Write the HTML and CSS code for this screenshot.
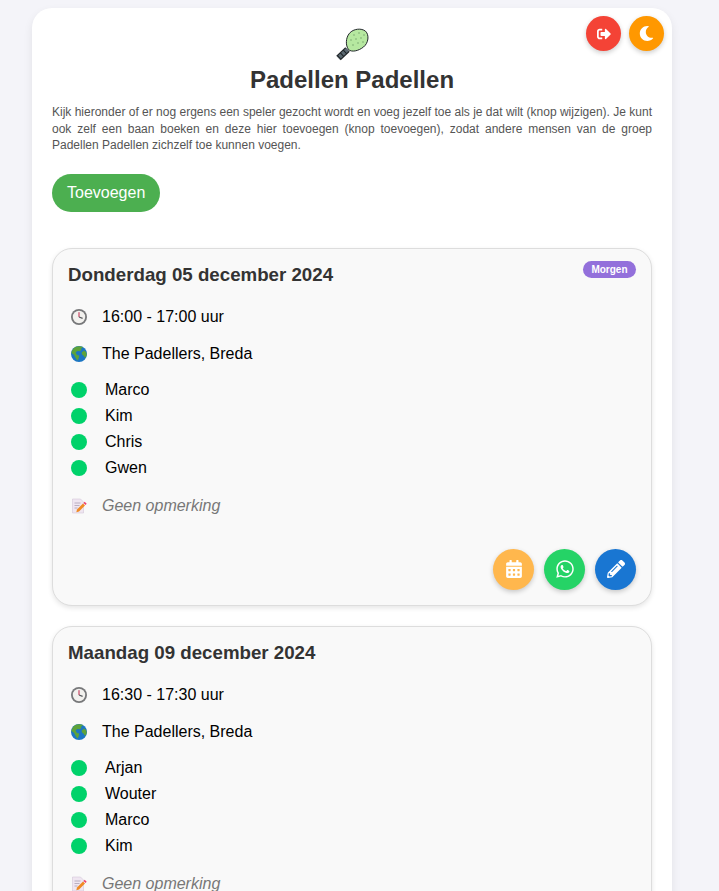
FILE: index.html
```html
<!DOCTYPE html>
<html lang="nl">
<head>
    <meta charset="UTF-8">
    <meta name="viewport" content="width=device-width, initial-scale=1.0">
    <title>Padellen Padellen</title>
    <link rel="stylesheet" href="styles.css">
</head>
<body>
    <svg class="sprite" aria-hidden="true">
        <symbol id="i-logout" viewBox="0 0 512 512"><path d="M497 273L329 441c-15 15-41 4.5-41-17v-96H152c-13.3 0-24-10.7-24-24v-96c0-13.3 10.7-24 24-24h136V88c0-21.4 25.9-32 41-17l168 168c9.3 9.4 9.3 24.6 0 34zM192 436v-40c0-6.6-5.4-12-12-12H96c-17.7 0-32-14.3-32-32V160c0-17.7 14.3-32 32-32h84c6.6 0 12-5.4 12-12V76c0-6.6-5.4-12-12-12H96c-53 0-96 43-96 96v192c0 53 43 96 96 96h84c6.6 0 12-5.4 12-12z"/></symbol>
        <symbol id="i-moon" viewBox="0 0 512 512"><path d="M283.211 512c78.962 0 151.079-35.925 198.857-94.792 7.068-8.708-.639-21.43-11.562-19.35-124.203 23.654-238.262-71.576-238.262-196.954 0-72.222 38.662-138.635 101.498-174.394 9.686-5.512 7.25-20.197-3.756-22.23A258.156 258.156 0 0 0 283.211 0c-141.309 0-256 114.511-256 256 0 141.309 114.511 256 256 256z"/></symbol>
        <symbol id="i-calendar" viewBox="0 0 448 512"><path d="M0 464c0 26.5 21.5 48 48 48h352c26.5 0 48-21.5 48-48V192H0v272zm320-196c0-6.6 5.4-12 12-12h40c6.6 0 12 5.4 12 12v40c0 6.6-5.4 12-12 12h-40c-6.6 0-12-5.4-12-12v-40zm0 128c0-6.6 5.4-12 12-12h40c6.6 0 12 5.4 12 12v40c0 6.6-5.4 12-12 12h-40c-6.6 0-12-5.4-12-12v-40zM192 268c0-6.6 5.4-12 12-12h40c6.6 0 12 5.4 12 12v40c0 6.6-5.4 12-12 12h-40c-6.6 0-12-5.4-12-12v-40zm0 128c0-6.6 5.4-12 12-12h40c6.6 0 12 5.4 12 12v40c0 6.6-5.4 12-12 12h-40c-6.6 0-12-5.4-12-12v-40zM64 268c0-6.6 5.4-12 12-12h40c6.6 0 12 5.4 12 12v40c0 6.6-5.4 12-12 12H76c-6.6 0-12-5.4-12-12v-40zm0 128c0-6.6 5.4-12 12-12h40c6.6 0 12 5.4 12 12v40c0 6.6-5.4 12-12 12H76c-6.6 0-12-5.4-12-12v-40zM400 64h-48V16c0-8.8-7.2-16-16-16h-32c-8.8 0-16 7.2-16 16v48H160V16c0-8.8-7.2-16-16-16h-32c-8.8 0-16 7.2-16 16v48H48C21.5 64 0 85.5 0 112v48h448v-48c0-26.5-21.5-48-48-48z"/></symbol>
        <symbol id="i-whatsapp" viewBox="0 0 448 512"><path d="M380.9 97.1C339 55.1 283.2 32 223.9 32c-122.4 0-222 99.6-222 222 0 39.1 10.2 77.3 29.6 111L0 480l117.7-30.9c32.4 17.7 68.9 27 106.1 27h.1c122.3 0 224.1-99.6 224.1-222 0-59.3-25.2-115-67.1-157zm-157 341.6c-33.2 0-65.7-8.9-94-25.7l-6.7-4-69.8 18.3L72 359.2l-4.4-7c-18.5-29.4-28.2-63.3-28.2-98.2 0-101.7 82.8-184.5 184.6-184.5 49.3 0 95.6 19.2 130.4 54.1 34.8 34.9 56.2 81.2 56.1 130.5 0 101.8-84.9 184.6-186.6 184.6zm101.2-138.2c-5.5-2.8-32.8-16.2-37.9-18-5.1-1.9-8.8-2.8-12.5 2.8-3.7 5.6-14.3 18-17.6 21.8-3.2 3.7-6.5 4.2-12 1.4-32.6-16.3-54-29.1-75.5-66-5.7-9.8 5.7-9.1 16.3-30.3 1.8-3.7.9-6.9-.5-9.7-1.4-2.8-12.5-30.1-17.1-41.2-4.5-10.8-9.1-9.3-12.5-9.5-3.2-.2-6.9-.2-10.6-.2-3.7 0-9.7 1.4-14.8 6.9-5.1 5.6-19.4 19-19.4 46.3 0 27.3 19.9 53.7 22.6 57.4 2.8 3.7 39.1 59.7 94.8 83.8 35.2 15.2 49 16.5 66.6 13.9 10.7-1.6 32.8-13.4 37.4-26.4 4.6-13 4.6-24.1 3.2-26.4-1.3-2.5-5-3.9-10.5-6.6z"/></symbol>
        <symbol id="i-pencil" viewBox="0 0 512 512"><path d="M497.9 142.1l-46.1 46.1c-4.7 4.7-12.3 4.7-17 0l-111-111c-4.7-4.7-4.7-12.3 0-17l46.1-46.1c18.7-18.7 49.1-18.7 67.9 0l60.1 60.1c18.8 18.7 18.8 49.1 0 67.9zM284.2 99.8L21.6 362.4.4 483.9c-2.9 16.4 11.4 30.6 27.8 27.8l121.5-21.3 262.6-262.6c4.7-4.7 4.7-12.3 0-17l-111-111c-4.8-4.7-12.4-4.7-17.1 0zM124.1 339.9c-5.5-5.5-5.5-14.3 0-19.8l154-154c5.5-5.5 14.3-5.5 19.8 0s5.5 14.3 0 19.8l-154 154c-5.5 5.5-14.3 5.5-19.8 0zM88 424h48v36.3l-64.5 11.3-31.1-31.1L51.7 376H88v48z"/></symbol>
        <symbol id="i-clock" viewBox="0 0 16 16">
            <circle cx="8" cy="8" r="8" fill="#77787a"/>
            <circle cx="8" cy="8" r="6.200" fill="#f2f1ee"/>
            <path d="M8 8V3.200" stroke="#c2274b" stroke-width="1" fill="none"/>
            <path d="M8 8l3.600 1.400" stroke="#55585c" stroke-width="1.200" fill="none"/>
        </symbol>
        <symbol id="i-globe" viewBox="0 0 16 16">
            <circle cx="8" cy="8" r="8" fill="#1c76c4"/>
            <path d="M4 1.200c2-1 5-1.400 7.500-.4 .6 .8-.4 1.600-1.500 1.800l.4 1.400-1.600 1.200-2.400-.2L4.600 6.400l1.400 2.600 2.200 .6-.4 2.400-1.200 2.400C5 13 4 10.600 3 8.800L.4 7C.8 4.600 2.200 2.400 4 1.200z" fill="#5da33a"/>
            <path d="M10.600 6.400l2.600-2 2 1.800.6 2.800-1.600 3-1.800-2.400-1.400-1z" fill="#5da33a"/>
        </symbol>
        <symbol id="i-memo" viewBox="0 0 16 16">
            <path d="M1.500 1h8l3 3v11h-11z" fill="#efe6f1" stroke="#d4c6d8" stroke-width=".6"/>
            <path d="M3.500 5h6M3.500 7.500h5M3.500 10h3" stroke="#b3a8bb" stroke-width=".9" fill="none"/>
            <path d="M6 11.500l6-6 2 2-6 6-2.700.7z" fill="#f08a24"/>
            <path d="M12.500 5l1.200-1.200 2 2L14.500 7z" fill="#ef3f6b"/>
        </symbol>
        <symbol id="i-racket" viewBox="0 0 34 34">
            <path d="M12.500 21.500L3.500 30" stroke="#1f2427" stroke-width="6.500" fill="none"/>
            <path d="M12.500 21.500L3.500 30" stroke="#5a6871" stroke-width="4" stroke-dasharray="3 1" fill="none"/>
            <path d="M13.500 21.500C10.500 17.500 10.500 10 14.500 5.200 18.500 .6 26.500 -.1 30.500 3.200 34.500 7 33.500 15 28.500 19 23.500 23 16.500 24.500 13.500 21.500z" fill="#b6e8a0" stroke="#22282b" stroke-width="1"/>
            <g fill="#6c9c64">
                <circle cx="19" cy="7" r=".7"/><circle cx="24" cy="5" r=".7"/><circle cx="29" cy="7" r=".7"/>
                <circle cx="16" cy="12" r=".7"/><circle cx="21" cy="11" r=".7"/><circle cx="26" cy="10" r=".7"/>
                <circle cx="18" cy="17" r=".7"/><circle cx="23" cy="15" r=".7"/><circle cx="28" cy="14" r=".7"/>
            </g>
        </symbol>
    </svg>

    <div class="container">
        <div class="top-buttons">
            <a class="round-btn small red" href="#"><svg class="icon-logout"><use href="#i-logout"/></svg></a>
            <a class="round-btn small orange" href="#"><svg class="icon-moon"><use href="#i-moon"/></svg></a>
        </div>

        <div class="logo"><svg><use href="#i-racket"/></svg></div>
        <h1>Padellen Padellen</h1>
        <p class="intro">Kijk hieronder of er nog ergens een speler gezocht wordt en voeg jezelf toe als je dat wilt (knop wijzigen). Je kunt ook zelf een baan boeken en deze hier toevoegen (knop toevoegen), zodat andere mensen van de groep Padellen Padellen zichzelf toe kunnen voegen.</p>
        <a class="add-btn" href="#">Toevoegen</a>

        <div class="card">
            <span class="badge">Morgen</span>
            <h2>Donderdag 05 december 2024</h2>
            <div class="row"><svg class="emoji"><use href="#i-clock"/></svg><span>16:00 - 17:00 uur</span></div>
            <div class="row"><svg class="emoji"><use href="#i-globe"/></svg><span>The Padellers, Breda</span></div>
            <ul class="players">
                <li>Marco</li>
                <li>Kim</li>
                <li>Chris</li>
                <li>Gwen</li>
            </ul>
            <div class="row remark"><svg class="emoji"><use href="#i-memo"/></svg><span>Geen opmerking</span></div>
            <div class="actions">
                <a class="round-btn yellow" href="#"><svg class="icon-calendar"><use href="#i-calendar"/></svg></a>
                <a class="round-btn green" href="#"><svg class="icon-action"><use href="#i-whatsapp"/></svg></a>
                <a class="round-btn blue" href="#"><svg class="icon-action"><use href="#i-pencil"/></svg></a>
            </div>
        </div>

        <div class="card">
            <h2>Maandag 09 december 2024</h2>
            <div class="row"><svg class="emoji"><use href="#i-clock"/></svg><span>16:30 - 17:30 uur</span></div>
            <div class="row"><svg class="emoji"><use href="#i-globe"/></svg><span>The Padellers, Breda</span></div>
            <ul class="players">
                <li>Arjan</li>
                <li>Wouter</li>
                <li>Marco</li>
                <li>Kim</li>
            </ul>
            <div class="row remark"><svg class="emoji"><use href="#i-memo"/></svg><span>Geen opmerking</span></div>
            <div class="actions">
                <a class="round-btn yellow" href="#"><svg class="icon-calendar"><use href="#i-calendar"/></svg></a>
                <a class="round-btn green" href="#"><svg class="icon-action"><use href="#i-whatsapp"/></svg></a>
                <a class="round-btn blue" href="#"><svg class="icon-action"><use href="#i-pencil"/></svg></a>
            </div>
        </div>
    </div>
</body>
</html>
```

FILE: styles.css
```css
* {
    box-sizing: border-box;
}

body {
    margin: 0;
    padding: 8px 0 20px;
    background: #f4f4f9;
    font-family: "Liberation Sans", Arial, sans-serif;
    color: #000;
}

.sprite {
    display: none;
}

.container {
    position: relative;
    width: 640px;
    margin-left: 32px;
    padding: 20px;
    background: #fff;
    border-radius: 20px;
    box-shadow: 0 4px 10px rgba(0, 0, 0, 0.08);
}

.top-buttons {
    position: absolute;
    top: 8px;
    right: 8px;
    display: flex;
    gap: 8px;
}

.round-btn {
    display: flex;
    align-items: center;
    justify-content: center;
    width: 41px;
    height: 41px;
    border-radius: 50%;
    box-shadow: 0 2px 5px rgba(0, 0, 0, 0.2);
}

.round-btn svg {
    fill: #fff;
}

.round-btn.small {
    width: 35px;
    height: 35px;
}

.red { background: #f44336; }
.orange { background: #ff9800; }
.yellow { background: #ffb74d; }
.green { background: #25d366; }
.blue { background: #1976d2; }

.icon-logout {
    width: 14px;
    height: 14px;
}

.icon-moon {
    width: 15px;
    height: 15px;
}

.icon-calendar {
    width: 16px;
    height: 18px;
}

.icon-action {
    width: 18px;
    height: 20px;
}

.logo {
    display: flex;
    justify-content: center;
    height: 34px;
}

.logo svg {
    width: 34px;
    height: 34px;
}

h1 {
    margin: 4px 0 10px;
    font-size: 24px;
    line-height: 28px;
    text-align: center;
    color: #333;
}

.intro {
    margin: 0 0 20px;
    font-size: 12px;
    line-height: 16.5px;
    text-align: justify;
    color: #555;
}

.add-btn {
    display: inline-block;
    height: 38px;
    padding: 0 15px;
    border-radius: 19px;
    background: #4caf50;
    color: #fff;
    font-size: 16px;
    line-height: 37px;
    text-decoration: none;
}

.card {
    position: relative;
    margin-top: 20px;
    padding: 15px;
    background: #f9f9f9;
    border: 1px solid #ddd;
    border-radius: 20px;
    box-shadow: 0 2px 5px rgba(0, 0, 0, 0.1);
}

.add-btn + .card {
    margin-top: 36px;
}

.badge {
    position: absolute;
    top: 12px;
    right: 15px;
    padding: 0 8.5px;
    height: 17px;
    border-radius: 9px;
    background: #9370db;
    color: #fff;
    font-size: 10px;
    font-weight: bold;
    line-height: 17px;
}

h2 {
    margin: 0 0 23px;
    font-size: 18.72px;
    line-height: 21px;
    color: #333;
}

.row {
    display: flex;
    align-items: center;
    height: 19px;
    margin-bottom: 18px;
    font-size: 16px;
}

.emoji {
    flex: none;
    width: 16px;
    height: 16px;
    margin: 0 15.5px 0 2.5px;
}

.players {
    margin: -5px 0 16px;
    padding: 0;
    list-style: none;
}

.players li {
    display: flex;
    align-items: center;
    height: 26px;
    font-size: 16px;
}

.players li::before {
    content: "";
    flex: none;
    width: 16px;
    height: 16px;
    margin: 0 18.5px 0 2.5px;
    border-radius: 50%;
    background: #00d26a;
}

.remark {
    color: #777;
    font-style: italic;
}

.actions {
    display: flex;
    justify-content: flex-end;
    gap: 10px;
    margin-top: 33px;
}
```
